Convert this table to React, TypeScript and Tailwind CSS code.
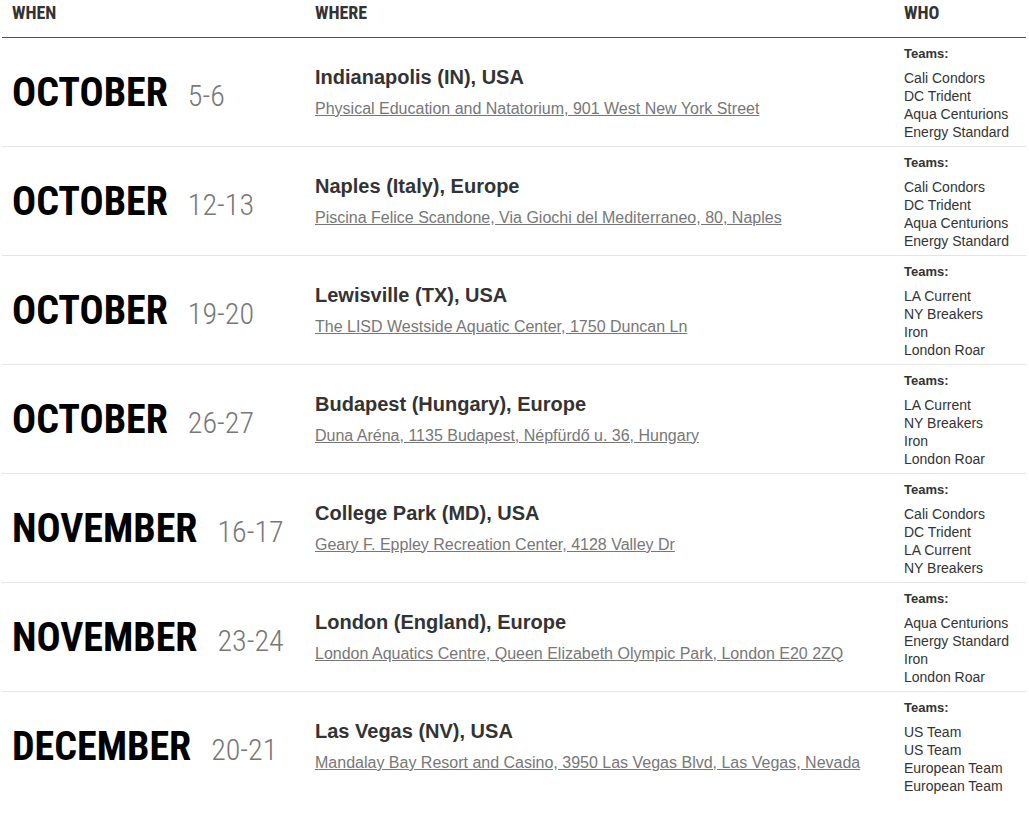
const events = [
  {
    month: "OCTOBER",
    days: "5-6",
    city: "Indianapolis (IN), USA",
    venue: "Physical Education and Natatorium, 901 West New York Street",
    teams: ["Cali Condors", "DC Trident", "Aqua Centurions", "Energy Standard"],
  },
  {
    month: "OCTOBER",
    days: "12-13",
    city: "Naples (Italy), Europe",
    venue: "Piscina Felice Scandone, Via Giochi del Mediterraneo, 80, Naples",
    teams: ["Cali Condors", "DC Trident", "Aqua Centurions", "Energy Standard"],
  },
  {
    month: "OCTOBER",
    days: "19-20",
    city: "Lewisville (TX), USA",
    venue: "The LISD Westside Aquatic Center, 1750 Duncan Ln",
    teams: ["LA Current", "NY Breakers", "Iron", "London Roar"],
  },
  {
    month: "OCTOBER",
    days: "26-27",
    city: "Budapest (Hungary), Europe",
    venue: "Duna Aréna, 1135 Budapest, Népfürdő u. 36, Hungary",
    teams: ["LA Current", "NY Breakers", "Iron", "London Roar"],
  },
  {
    month: "NOVEMBER",
    days: "16-17",
    city: "College Park (MD), USA",
    venue: "Geary F. Eppley Recreation Center, 4128 Valley Dr",
    teams: ["Cali Condors", "DC Trident", "LA Current", "NY Breakers"],
  },
  {
    month: "NOVEMBER",
    days: "23-24",
    city: "London (England), Europe",
    venue: "London Aquatics Centre, Queen Elizabeth Olympic Park, London E20 2ZQ",
    teams: ["Aqua Centurions", "Energy Standard", "Iron", "London Roar"],
  },
  {
    month: "DECEMBER",
    days: "20-21",
    city: "Las Vegas (NV), USA",
    venue: "Mandalay Bay Resort and Casino, 3950 Las Vegas Blvd, Las Vegas, Nevada",
    teams: ["US Team", "US Team", "European Team", "European Team"],
  },
];

const condensed = "font-['Roboto_Condensed',Roboto,sans-serif] font-stretch-condensed";

export default function App() {
  return (
    <div className="min-h-screen bg-white pl-[2px] pr-[3px] font-['Liberation_Sans',Arial,sans-serif]">
      {/* Header */}
      <div
        className={`grid grid-cols-[303px_589px_1fr] border-b border-[#2d5986] pt-[1px] pb-[12px] text-[18px] leading-[24px] font-bold text-[#333] ${condensed}`}
      >
        <div className="pl-[10px]">WHEN</div>
        <div className="pl-[10px]">WHERE</div>
        <div className="pl-[10px]">WHO</div>
      </div>

      {events.map((ev, i) => (
        <div
          key={i}
          className={`grid grid-cols-[303px_589px_1fr] ${
            i < events.length - 1 ? "border-b border-[#e5e5e5]" : ""
          }`}
        >
          <div className="flex items-center pl-[10px] pt-[2px]">
            <div className={`flex items-baseline gap-[20px] ${condensed}`}>
              <span className="text-[40px] leading-none font-bold text-black">
                {ev.month}
              </span>
              <span className="text-[30px] leading-none font-light text-[#777]">
                {ev.days}
              </span>
            </div>
          </div>

          <div className="flex flex-col justify-center pl-[10px] pt-[1px]">
            <div className="text-[20px] leading-[24px] font-bold text-[#333]">
              {ev.city}
            </div>
            <a
              href="#"
              className="mt-[8px] text-[16px] leading-[24px] text-[#777] underline"
            >
              {ev.venue}
            </a>
          </div>

          <div className="pl-[10px] pt-[7px] pb-[5px] text-[#333]">
            <div className="text-[13px] leading-[18px] font-bold">Teams:</div>
            <ul className="mt-[6px] text-[14px] leading-[18px]">
              {ev.teams.map((t, j) => (
                <li key={j}>{t}</li>
              ))}
            </ul>
          </div>
        </div>
      ))}
    </div>
  );
}
